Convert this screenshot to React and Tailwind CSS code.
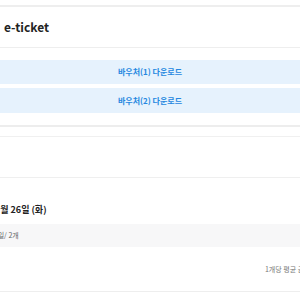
export default function App() {
  const font = { fontFamily: '"Noto Sans CJK KR", "Noto Sans", sans-serif' }
  return (
    <div className="w-[300px] h-[300px] overflow-hidden bg-white text-[#222]" style={font}>
      <div className="h-[5px]" />
      <div className="h-[2px] bg-[#eeeeee]" />
      <div className="h-10 flex items-center pl-1">
        <h2 className="text-[12px] font-bold leading-none">e-ticket</h2>
      </div>
      <div className="h-px bg-[#eeeeee]" />

      <div className="pt-3 flex flex-col gap-1">
        <button className="h-6 w-full bg-[#e6f2fd] text-[#2587e0] text-[8px] font-bold">
          바우처(1) 다운로드
        </button>
        <button className="h-[25px] w-full bg-[#e6f2fd] text-[#2587e0] text-[8px] font-bold">
          바우처(2) 다운로드
        </button>
      </div>

      <div className="h-3" />
      <div className="h-[2px] bg-[#ededed]" />
      <div className="h-[9px]" />
      <div className="h-px bg-[#f0f0f0]" />
      <div className="h-10" />
      <div className="h-px bg-[#efefef]" />

      <div className="h-[46px] flex items-end pb-[10px] -ml-[42px] whitespace-nowrap">
        <span className="text-[9px] font-bold leading-none">2024년 11월 26일 (화)</span>
      </div>
      <div className="h-[23px] bg-[#f7f7f8] flex items-center -ml-[82px] whitespace-nowrap">
        <span className="text-[7px] text-[#666] leading-none">2024.11.26 - 11.26 / 1박 2일/ 2개</span>
      </div>
      <div className="h-[44px] flex items-center justify-end -mr-[40px] whitespace-nowrap">
        <span className="text-[7px] text-[#777] leading-none">1개당 평균 금액 75,000원</span>
      </div>
      <div className="h-px bg-[#eeeeee]" />
    </div>
  )
}
